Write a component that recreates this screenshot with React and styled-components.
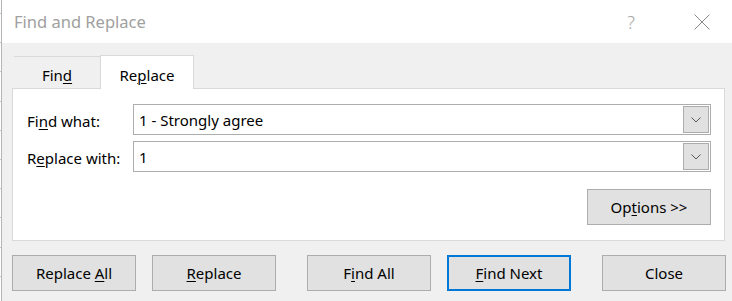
import React from "react";
import styled, { createGlobalStyle, css } from "styled-components";

const Global = createGlobalStyle`
  html, body { margin: 0; padding: 0; background: #f0f0f0; }
  body { font-family: "Noto Sans", "Open Sans", sans-serif; }
  * { box-sizing: border-box; }
`;

const Window = styled.div`
  display: flex;
  width: 732px;
  height: 301px;
  overflow: hidden;
`;

const Edge = styled.div`
  width: 1px;
  flex: none;
  background-color: #ffffff;
  background-image: repeating-linear-gradient(
    to bottom,
    transparent 0 13px,
    #c6c6c6 13px 14px,
    transparent 14px 29.2px
  );
`;

const Dialog = styled.div`
  flex: 1;
  display: flex;
  flex-direction: column;
  border-left: 1px solid #b4b4b4;
  background: #f0f0f0;
`;

const TitleBar = styled.div`
  height: 43px;
  flex: none;
  background: #ffffff;
  display: flex;
  align-items: center;
  padding-left: 12px;
`;

const Title = styled.div`
  flex: 1;
  font-size: 16.5px;
  color: #a0a0a0;
`;

const Help = styled.div`
  width: 12px;
  font-size: 18px;
  color: #a6a6a6;
  font-weight: 300;
  margin-right: 57px;
  text-align: center;
  line-height: 1;
`;

const CloseX = styled.svg`
  width: 16px;
  height: 16px;
  margin-right: 22px;
`;

const Body = styled.div`
  flex: 1;
  padding: 12px 0 0 10px;
  display: flex;
  flex-direction: column;
`;

const TabRow = styled.div`
  display: flex;
  align-items: flex-end;
  height: 33px;
  padding-left: 2px;
  position: relative;
  z-index: 1;
`;

const Tab = styled.div`
  height: ${(p) => (p.$active ? "34px" : "32px")};
  width: ${(p) => p.$w}px;
  display: flex;
  align-items: center;
  justify-content: center;
  font-size: 15px;
  color: #000;
  padding-top: 4px;
  ${(p) =>
    p.$active
      ? css`
          background: #ffffff;
          border: 1px solid #d9d9d9;
          border-bottom: none;
          margin-bottom: -1px;
        `
      : css`
          border-top: 1px solid #d9d9d9;
          margin-bottom: 0;
        `}
`;

const U = styled.span`
  text-decoration: underline;
  text-underline-offset: 2px;
  text-decoration-thickness: 1px;
`;

const Panel = styled.div`
  width: 713px;
  height: 153px;
  background: #ffffff;
  border: 1px solid #d9d9d9;
  padding: 15px 13px 0 14px;
  display: flex;
  flex-direction: column;
`;

const FieldRow = styled.div`
  display: grid;
  grid-template-columns: 106px 1fr;
  align-items: center;
  margin-bottom: 6px;
`;

const Label = styled.label`
  font-size: 15px;
  color: #000;
  padding-top: 2px;
`;

const Combo = styled.div`
  height: 31px;
  border: 1px solid #adadad;
  background: #fff;
  display: flex;
  align-items: center;
  padding: 1px 1px 1px 5px;
`;

const ComboText = styled.div`
  flex: 1;
  font-size: 15px;
  color: #000;
  padding-top: 1px;
`;

const DropButton = styled.div`
  width: 26px;
  height: 27px;
  background: #e1e1e1;
  border: 1px solid #adadad;
  display: flex;
  align-items: center;
  justify-content: center;
`;

const OptionsRow = styled.div`
  display: flex;
  justify-content: flex-end;
  margin-top: 11px;
`;

const Button = styled.button`
  width: 124px;
  height: 36px;
  background: #e1e1e1;
  border: ${(p) => (p.$default ? "2px solid #0078d7" : "1px solid #adadad")};
  font-family: "Noto Sans", "Open Sans", sans-serif;
  font-size: 15px;
  color: #000;
  padding: 0;
`;

const ButtonRow = styled.div`
  display: flex;
  margin-top: 14px;
  width: 714px;
  justify-content: space-between;
`;

const Group = styled.div`
  display: flex;
  gap: 16px;
`;

const Chevron = () => (
  <svg width="10" height="6" viewBox="0 0 10 6">
    <path d="M0.5 0.5 L5 5 L9.5 0.5" fill="none" stroke="#555" strokeWidth="1" />
  </svg>
);

export default function App() {
  return (
    <>
      <Global />
      <Window>
        <Edge />
        <Dialog>
          <TitleBar>
            <Title>Find and Replace</Title>
            <Help>?</Help>
            <CloseX viewBox="0 0 16 16">
              <path d="M0.5 0.5 L15.5 15.5 M15.5 0.5 L0.5 15.5" stroke="#8a8a8a" strokeWidth="1" fill="none" />
            </CloseX>
          </TitleBar>
          <Body>
            <TabRow>
              <Tab $w={86}>
                <span>
                  Fin<U>d</U>
                </span>
              </Tab>
              <Tab $w={94} $active>
                <span>
                  Re<U>p</U>lace
                </span>
              </Tab>
            </TabRow>
            <Panel>
              <FieldRow>
                <Label>
                  Fi<U>n</U>d what:
                </Label>
                <Combo>
                  <ComboText>1 - Strongly agree</ComboText>
                  <DropButton>
                    <Chevron />
                  </DropButton>
                </Combo>
              </FieldRow>
              <FieldRow>
                <Label>
                  R<U>e</U>place with:
                </Label>
                <Combo>
                  <ComboText>1</ComboText>
                  <DropButton>
                    <Chevron />
                  </DropButton>
                </Combo>
              </FieldRow>
              <OptionsRow>
                <Button>
                  Op<U>t</U>ions &gt;&gt;
                </Button>
              </OptionsRow>
            </Panel>
            <ButtonRow>
              <Group>
                <Button>
                  Replace <U>A</U>ll
                </Button>
                <Button>
                  <U>R</U>eplace
                </Button>
              </Group>
              <Group>
                <Button>
                  F<U>i</U>nd All
                </Button>
                <Button $default>
                  <U>F</U>ind Next
                </Button>
              </Group>
              <Button>Close</Button>
            </ButtonRow>
          </Body>
        </Dialog>
      </Window>
    </>
  );
}
